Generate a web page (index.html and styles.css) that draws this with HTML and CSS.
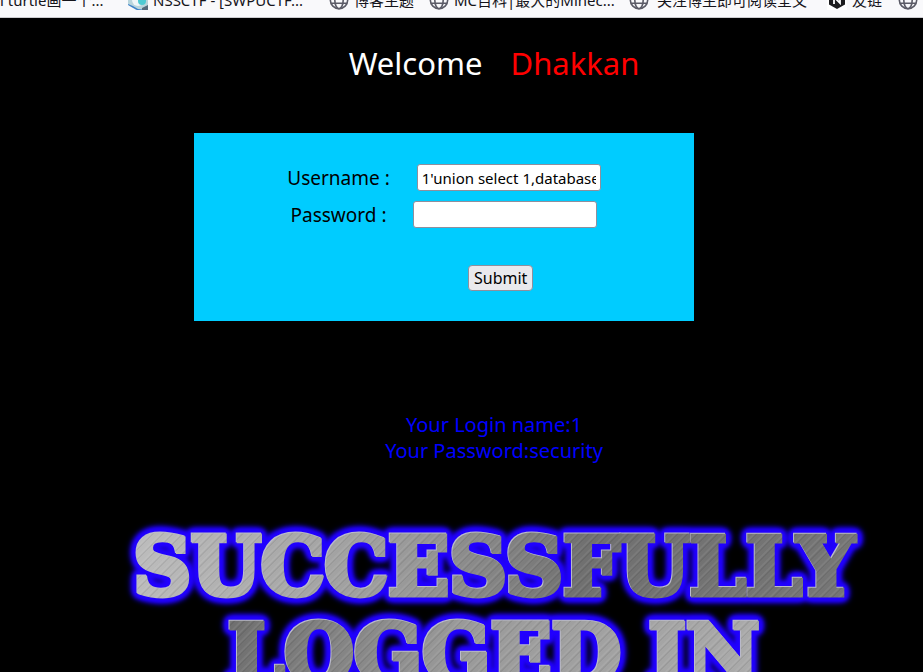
FILE: index.html
```
<!DOCTYPE html>
<html lang="en">
<head>
<meta charset="utf-8">
<title>Login</title>
<link rel="stylesheet" href="styles.css">
</head>
<body>
<svg class="sprite" aria-hidden="true">
  <symbol id="globe" viewBox="0 0 20 20">
    <g fill="none" stroke="#5b5b66" stroke-width="1.6">
      <circle cx="10" cy="10" r="8.7"/>
      <ellipse cx="10" cy="10" rx="4.2" ry="8.7"/>
      <path d="M2 6.8h16M2 13.2h16"/>
    </g>
  </symbol>
</svg>
<nav class="bookmarks" aria-label="Bookmarks">
  <a class="bookmark" href="#"><span>l turtle画一个...</span></a>
  <a class="bookmark" href="#">
    <svg class="icon" viewBox="0 0 20 20"><path fill="#b9d5dc" d="M0 0h20v20H8L0 14z"/><circle cx="10" cy="10" r="6" fill="#eef6f8"/><circle cx="14" cy="11" r="4" fill="#4fcbd3"/><path fill="#3f83c9" d="M0 14q6 2 10 5l8 1H9Q3 17 0 15z"/><path fill="#566b7c" d="M14 18l6-3v5h-6z"/></svg>
    <span>NSSCTF - [SWPUCTF...</span></a>
  <a class="bookmark" href="#"><svg class="icon"><use href="#globe"/></svg><span>博客主题</span></a>
  <a class="bookmark" href="#"><svg class="icon"><use href="#globe"/></svg><span>MC百科|最大的Minec...</span></a>
  <a class="bookmark wide" href="#"><svg class="icon"><use href="#globe"/></svg><span>关注博主即可阅读全文</span></a>
  <a class="bookmark" href="#">
    <svg class="icon" viewBox="0 0 20 20"><path fill="#fff" d="M0 0h20v20H0z"/><path fill="#1c1c1e" d="M10 1l8 4.500v9L10 19l-8-4.500v-9z"/><path fill="none" stroke="#fff" stroke-width="1.800" d="M7 14V7l6 6V6"/></svg>
    <span>友链</span></a>
  <a class="bookmark" href="#" aria-label="Bookmark"><svg class="icon"><use href="#globe"/></svg></a>
</nav>
<main class="page">
  <h1 class="welcome">Welcome <span class="name">Dhakkan</span></h1>
  <form class="login">
    <div class="field"><label for="uname">Username :</label><input id="uname" type="text" value="1'union select 1,database()#"></div>
    <div class="field"><label for="passwd">Password :</label><input id="passwd" type="text"></div>
    <button class="submit" type="submit">Submit</button>
  </form>
  <p class="result">Your Login name:1<br>Your Password:security</p>
  <h2 class="banner">SUCCESSFULLY<br>LOGGED IN</h2>
</main>
</body>
</html>
```
FILE: styles.css
```
* { box-sizing: border-box; }
html, body { height: 100%; }
body {
  margin: 0;
  overflow: hidden;
  background: #000;
  font-family: "Noto Sans", "Noto Sans CJK SC", sans-serif;
}
.sprite { display: none; }
.bookmarks {
  display: grid;
  grid-template-columns: 128px 201px 100px 200px 198px 71px auto;
  align-content: end;
  height: 18px;
  overflow: hidden;
  background: #f9f9fb;
  border-bottom: 1px solid #ccccd0;
}
.bookmark {
  display: flex;
  align-items: center;
  gap: 5px;
  height: 34px;
  color: #15141a;
  font-size: 15px;
  line-height: 24px;
  text-decoration: none;
  white-space: nowrap;
}
.wide { gap: 8px; }
.icon { flex: none; width: 20px; height: 20px; }
.page { padding: 23px 0 0 65px; text-align: center; }
.welcome {
  margin: 0;
  color: #fff;
  font-size: 31px;
  font-weight: 400;
  line-height: 44px;
}
.name { margin-left: 20px; color: #f00; }
.login {
  width: 500px;
  height: 188px;
  margin: 48px auto 0;
  translate: -50px 0;
  padding-top: 31px;
  background: #0cf;
}
.field {
  display: flex;
  justify-content: center;
  align-items: center;
  gap: 27px;
  margin-bottom: 10px;
  font-size: 19px;
  line-height: 26px;
}
.field input {
  width: 184px;
  height: 27px;
  padding: 2px 4px;
  border: 1px solid #8f8f9d;
  border-radius: 3px;
  background: #fff;
  color: #000;
  font: 15px "Noto Sans", sans-serif;
}
.submit {
  display: block;
  margin: 37px auto 0 274px;
  height: 26px;
  padding: 0 5px;
  border: 1px solid #8f8f9d;
  border-radius: 4px;
  background: #e9e9ed;
  color: #000;
  font: 16px "Noto Sans", sans-serif;
}
.result {
  margin: 91px 0 0;
  color: #00f;
  font-size: 20px;
  line-height: 26px;
}
.banner {
  margin: 60px 0 0;
  background:
    repeating-linear-gradient(135deg, #fff0 0 3px, #fff1 4px 5px, #0001 6px 7px),
    linear-gradient(100deg, #bbb 10%, #999 40%, #707070 60%, #777 100%) top / 100% 50% no-repeat,
    linear-gradient(100deg, #707070 20%, #999 45%, #aaa 80%) bottom / 100% 50% no-repeat;
  background-clip: text;
  -webkit-background-clip: text;
  -webkit-text-stroke: 5px transparent;
  color: transparent;
  filter: drop-shadow(-1px -1px 0 #bbc) drop-shadow(0 0 2px #20f) drop-shadow(0 0 2px #20f) drop-shadow(0 0 2px #20f) drop-shadow(0 0 2px #20f) drop-shadow(0 0 2px #20f);
  font: bold 80px/87px "DejaVu Serif", serif;
}
```
